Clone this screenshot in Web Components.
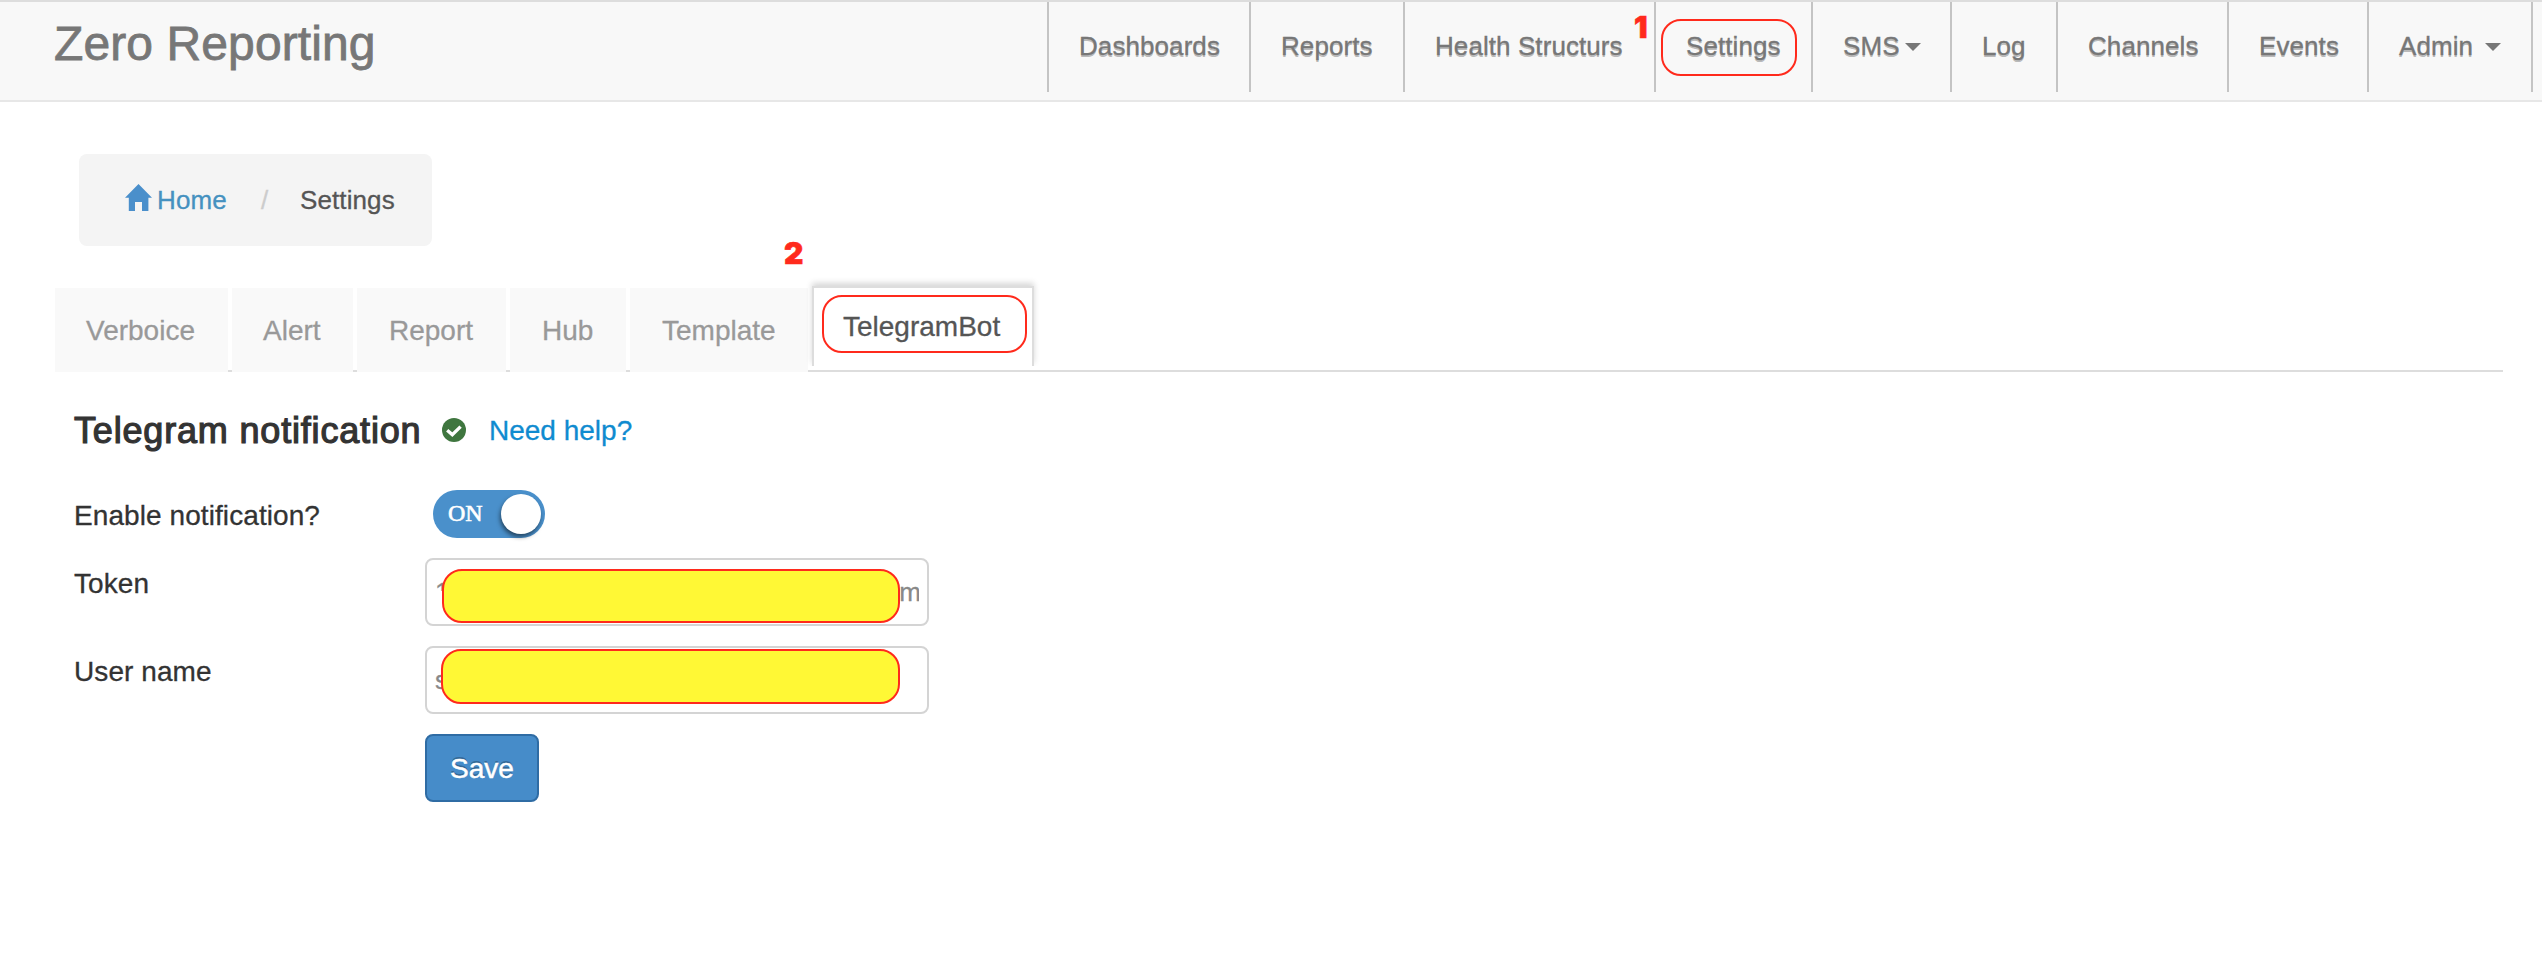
<!DOCTYPE html>
<html lang="en">
<head>
<meta charset="utf-8">
<title>Zero Reporting - Settings</title>
<style>
html,body{margin:0;background:#fff}
body{font-family:"Liberation Sans",Arial,sans-serif;font-size:28px;color:#333;width:2542px;height:954px;overflow:hidden;-webkit-text-stroke:.3px currentColor}
</style>
</head>
<body>
<zero-app></zero-app>
<script>
function define(name, html) {
  const t = document.createElement('template');
  t.innerHTML = html;
  customElements.define(name, class extends HTMLElement {
    constructor() {
      super();
      this.attachShadow({ mode: 'open' }).appendChild(t.content.cloneNode(true));
    }
  });
}

/* Rounded red outline, optionally filled to redact a value */
define('mark-box', `<style>
:host{display:block;position:absolute;box-sizing:border-box;border:2px solid #ff2a1c;border-radius:20px;background:var(--fill,transparent);pointer-events:none}
</style>`);

define('mark-number', `<style>
:host{display:block;position:absolute;font:900 30px/30px Inter,"Liberation Sans",sans-serif;color:#ff2a1c;-webkit-text-stroke:.6px #ff2a1c;text-shadow:none}
</style><slot></slot>`);

define('nav-item', `<style>
:host{display:block;position:relative;box-sizing:border-box;height:90px;border-left:2px solid #c4c4c4;padding-left:30px;font-size:26px;line-height:88px;color:#777;letter-spacing:.08px;text-shadow:0 2px 0 rgba(0,0,0,.26);white-space:nowrap;-webkit-text-stroke:.3px #777}
:host([last]){border-right:2px solid #c4c4c4}
i{display:none;width:0;height:0;border:8px solid transparent;border-top-color:#777;border-bottom:0;vertical-align:4px;margin-left:var(--caret-gap,5px)}
:host([caret]) i{display:inline-block}
</style><slot></slot><i></i>`);

define('top-bar', `<style>
:host{display:flex;justify-content:space-between;box-sizing:border-box;height:102px;background:#f8f8f8;border-top:2px solid #ddd;border-bottom:2px solid #e7e7e7;padding:0 9px 0 54px}
.brand{font-size:48px;line-height:83px;color:#777;letter-spacing:.1px;-webkit-text-stroke:.8px #777}
nav{display:flex}
</style>
<div class="brand">Zero Reporting</div>
<nav>
<nav-item style="width:202px">Dashboards</nav-item>
<nav-item style="width:154px">Reports</nav-item>
<nav-item style="width:251px">Health Structurs<mark-number style="left:229px;top:10px">1</mark-number></nav-item>
<nav-item style="width:157px">Settings<mark-box style="left:5px;top:17px;width:136px;height:57px"></mark-box></nav-item>
<nav-item caret style="width:139px">SMS</nav-item>
<nav-item style="width:106px">Log</nav-item>
<nav-item style="width:171px">Channels</nav-item>
<nav-item style="width:140px">Events</nav-item>
<nav-item caret last style="width:166px;--caret-gap:12px">Admin</nav-item>
</nav>`);

define('bread-crumb', `<style>
:host{display:flex;box-sizing:border-box;width:353px;height:92px;border-radius:8px;background:#f4f4f4;padding-left:46px;font-size:26px;line-height:92px;color:#555;letter-spacing:.1px}
svg{width:27px;height:27px;margin-top:30px;fill:#4a8fcb}
a{margin-left:5px;width:104px;color:#4591c0}
b{font-weight:400;color:#ccc;width:39px}
</style>
<svg viewBox="0 0 27 27"><path d="M13.5 0 27 13.7H23.4V27H17V18H10V27H3.8V13.7H0Z"/></svg>
<a>Home</a><b>/</b><span>Settings</span>`);

define('tab-item', `<style>
:host{display:block;box-sizing:border-box;height:84px;background:#f9f9f9;color:#999;padding-left:32px;line-height:85px;margin-right:4px;white-space:nowrap}
:host([active]){position:relative;margin-top:-2px;background:#fff;color:#555;padding-left:29px;line-height:78px;border:2px solid #ddd;border-bottom:0;height:80px;box-shadow:0 -3px 6px rgba(0,0,0,.16);clip-path:inset(-12px -6px 0 -6px)}
</style><slot></slot>`);

define('tab-bar', `<style>
:host{display:flex;position:relative;height:84px;box-shadow:inset 0 -2px #ddd}
</style>
<tab-item style="width:173px;padding-left:31px">Verboice</tab-item>
<tab-item style="width:121px;padding-left:31px">Alert</tab-item>
<tab-item style="width:149px">Report</tab-item>
<tab-item style="width:116px">Hub</tab-item>
<tab-item style="width:178px">Template</tab-item>
<tab-item active style="width:222px">TelegramBot<mark-box style="left:8px;top:7px;width:205px;height:58px"></mark-box></tab-item>
<mark-number style="left:729px;top:-50px">2</mark-number>`);

define('toggle-switch', `<style>
:host{display:flex;justify-content:space-between;box-sizing:border-box;width:112px;height:48px;border-radius:24px;background:#4a90cb;padding:4px 4px 4px 15px;margin-left:8px;color:#fff;font:24px/46px "Liberation Serif",serif}
span{height:40px;margin-top:-4px;-webkit-text-stroke:.6px #fff}
i{width:40px;height:40px;border-radius:50%;background:#fff;box-shadow:-1px 3px 4px rgba(0,0,0,.5)}
</style><span>ON</span><i></i>`);

define('text-field', `<style>
:host{display:block;position:relative;box-sizing:border-box;width:504px;height:68px;border:2px solid #d4d4d4;border-radius:8px;padding:0 8px;font-size:26px;line-height:64px;color:#888}
div{display:flex;justify-content:space-between;overflow:hidden;height:64px}
</style><div><slot></slot></div><slot name="cover"></slot>`);

define('save-button', `<style>
:host{display:block;box-sizing:border-box;width:114px;height:68px;border:2px solid #2f6ca4;border-radius:8px;background:#468cc9;color:#fff;text-align:center;line-height:66px;text-shadow:0 -2px 0 rgba(0,0,0,.25);-webkit-text-stroke:.5px #fff}
</style><slot></slot>`);

define('telegram-form', `<style>
:host{display:block;padding-left:19px}
header{display:flex;height:74px;line-height:74px;margin-top:22px}
h1{margin:0;font-size:36px;font-weight:400;line-height:74px;letter-spacing:.82px;-webkit-text-stroke:1.2px #333;width:368px;white-space:nowrap}
svg{width:24px;height:24px;margin-top:24px}
header a{margin-left:23px;line-height:73px;color:#0f8bd0}
.form{display:grid;grid-template-columns:351px 504px;grid-template-rows:48px 68px 68px 68px;row-gap:20px;margin-top:22px}
label{line-height:51px;white-space:nowrap;letter-spacing:.08px}
</style>
<header><h1>Telegram notification</h1>
<svg viewBox="0 0 24 24"><circle cx="12" cy="12" r="12" fill="#3f763f"/><path d="M5.2 12.3 10.3 16.6 18.6 8.6" fill="none" stroke="#fff" stroke-width="3.4"/></svg>
<a>Need help?</a></header>
<div class="form">
<label>Enable notification?</label><toggle-switch></toggle-switch>
<label>Token</label><text-field><span style="clip-path:inset(0 0 33px 0)">1</span><span style="margin-right:-2px">m</span><mark-box slot="cover" style="left:15px;top:9px;width:458px;height:54px;--fill:#fff835"></mark-box></text-field>
<label>User name</label><text-field><span>s</span><mark-box slot="cover" style="left:14px;top:1px;width:459px;height:55px;--fill:#fff835"></mark-box></text-field>
<span></span><save-button>Save</save-button>
</div>`);

define('zero-app', `<style>
:host{display:block}
main{padding:52px 39px 0 55px}
bread-crumb{margin:0 0 42px 24px}
</style>
<top-bar></top-bar>
<main><bread-crumb></bread-crumb><tab-bar></tab-bar><telegram-form></telegram-form></main>`);
</script>
</body>
</html>
